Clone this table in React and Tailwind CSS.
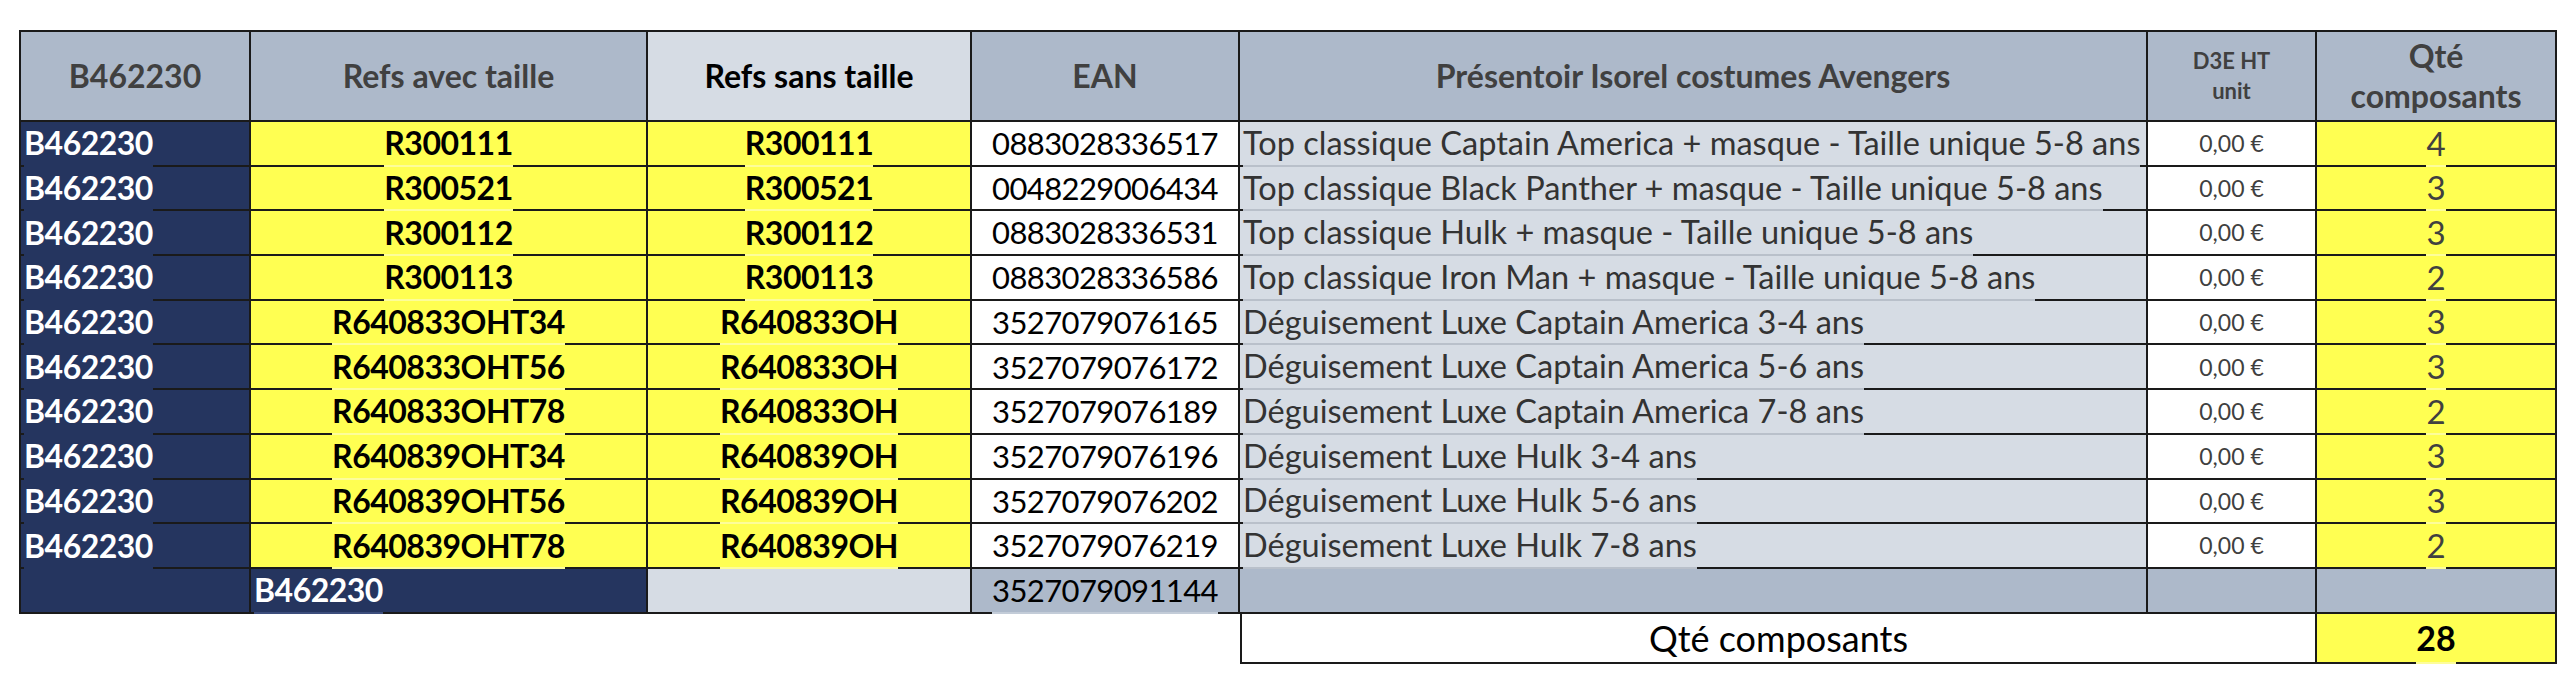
const rows = [
  ['R300111', 'R300111', '0883028336517', 'Top classique Captain America + masque - Taille unique 5-8 ans', 4],
  ['R300521', 'R300521', '0048229006434', 'Top classique Black Panther + masque - Taille unique 5-8 ans', 3],
  ['R300112', 'R300112', '0883028336531', 'Top classique Hulk + masque - Taille unique 5-8 ans', 3],
  ['R300113', 'R300113', '0883028336586', 'Top classique Iron Man + masque - Taille unique 5-8 ans', 2],
  ['R640833OHT34', 'R640833OH', '3527079076165', 'Déguisement Luxe Captain America 3-4 ans', 3],
  ['R640833OHT56', 'R640833OH', '3527079076172', 'Déguisement Luxe Captain America 5-6 ans', 3],
  ['R640833OHT78', 'R640833OH', '3527079076189', 'Déguisement Luxe Captain America 7-8 ans', 2],
  ['R640839OHT34', 'R640839OH', '3527079076196', 'Déguisement Luxe Hulk 3-4 ans', 3],
  ['R640839OHT56', 'R640839OH', '3527079076202', 'Déguisement Luxe Hulk 5-6 ans', 3],
  ['R640839OHT78', 'R640839OH', '3527079076219', 'Déguisement Luxe Hulk 7-8 ans', 2],
];

// cellule type Excel : le trait du bas est interrompu sous le texte (gap)
function Cell({ bg = 'bg-white', gap = 'border-[#1a1a1a]', left = false, first = false, text = '', children }) {
  return (
    <div className={`flex border-r-2 border-[#1a1a1a] ${first ? 'border-l-2' : ''} ${bg}`}>
      <div className={`${left ? 'w-[3px]' : 'flex-1'} border-b-2 border-[#1a1a1a]`} />
      <div className={`flex items-center whitespace-nowrap border-b-2 ${gap} ${text}`}>{children}</div>
      <div className="flex-1 border-b-2 border-[#1a1a1a]" />
    </div>
  );
}

function Head({ bg = 'bg-[#adb9ca]', first = false, text = 'text-[32px] text-[#404040]', children }) {
  return (
    <div
      className={`flex flex-col items-center justify-center border-t-2 border-r-2 border-b-2 border-[#1a1a1a] text-center font-bold ${first ? 'border-l-2' : ''} ${bg} ${text}`}
    >
      {children}
    </div>
  );
}

export default function App() {
  return (
    <div className="h-[689px] w-[2560px] bg-white pt-[30px] pl-[19px] font-['Lato',sans-serif]">
      <div className="grid grid-cols-[232px_397px_324px_268px_908px_169px_240px] grid-rows-[92px_repeat(10,44.7px)_45px_50px]">
        {/* en-tête */}
        <Head first>B462230</Head>
        <Head>Refs avec taille</Head>
        <Head bg="bg-[#d6dce4]" text="text-[32px] text-black">Refs sans taille</Head>
        <Head>EAN</Head>
        <Head>Présentoir Isorel costumes Avengers</Head>
        <Head text="text-[22px] leading-[30px] text-[#404040]">
          <span>D3E HT</span>
          <span>unit</span>
        </Head>
        <Head text="text-[32px] leading-[40px] text-[#404040]">
          <span>Qté</span>
          <span>composants</span>
        </Head>

        {/* lignes produits */}
        {rows.map(([avec, sans, ean, label, qty]) => (
          <div key={avec} className="contents">
            <Cell first left bg="bg-[#25355f]" gap="border-[#25355f]" text="text-[32px] font-bold text-white tracking-[-0.5px]">
              B462230
            </Cell>
            <Cell bg="bg-[#ffff52]" gap="border-[#fdfd9a]" text="text-[32px] font-bold text-black tracking-[-0.5px]">
              {avec}
            </Cell>
            <Cell bg="bg-[#ffff52]" gap="border-[#fdfd9a]" text="text-[32px] font-bold text-black tracking-[-0.5px]">
              {sans}
            </Cell>
            <Cell text="text-[31px] text-black tracking-[-0.6px]">{ean}</Cell>
            <Cell left bg="bg-[#d6dce4]" gap="border-[#b9c0ca]" text="text-[32.5px] text-[#333333]">
              {label}
            </Cell>
            <Cell text="text-[23px] text-[#404040]">0,00 €</Cell>
            <Cell bg="bg-[#ffff52]" gap="border-[#fdfd9a]" text="text-[33px] text-[#404040]">
              {qty}
            </Cell>
          </div>
        ))}

        {/* ligne du présentoir */}
        <Cell first bg="bg-[#25355f]" />
        <Cell left bg="bg-[#25355f]" gap="border-[#3c4d7c]" text="text-[32px] font-bold text-white tracking-[-0.5px]">
          B462230
        </Cell>
        <Cell bg="bg-[#d6dce4]" />
        <Cell bg="bg-[#adb9ca]" gap="border-[#c3ccd8]" text="text-[31px] text-black tracking-[-0.6px]">
          3527079091144
        </Cell>
        <Cell bg="bg-[#adb9ca]" />
        <Cell bg="bg-[#adb9ca]" />
        <Cell bg="bg-[#adb9ca]" />

        {/* total */}
        <div className="col-span-4" />
        <div className="col-span-2 flex items-center justify-center border-l-2 border-r-2 border-b-2 border-[#1a1a1a] bg-white text-[36px] text-black">
          Qté composants
        </div>
        <Cell bg="bg-[#ffff52]" gap="border-[#fdfd9a]" text="text-[34px] font-bold text-black">
          28
        </Cell>
      </div>
    </div>
  );
}
